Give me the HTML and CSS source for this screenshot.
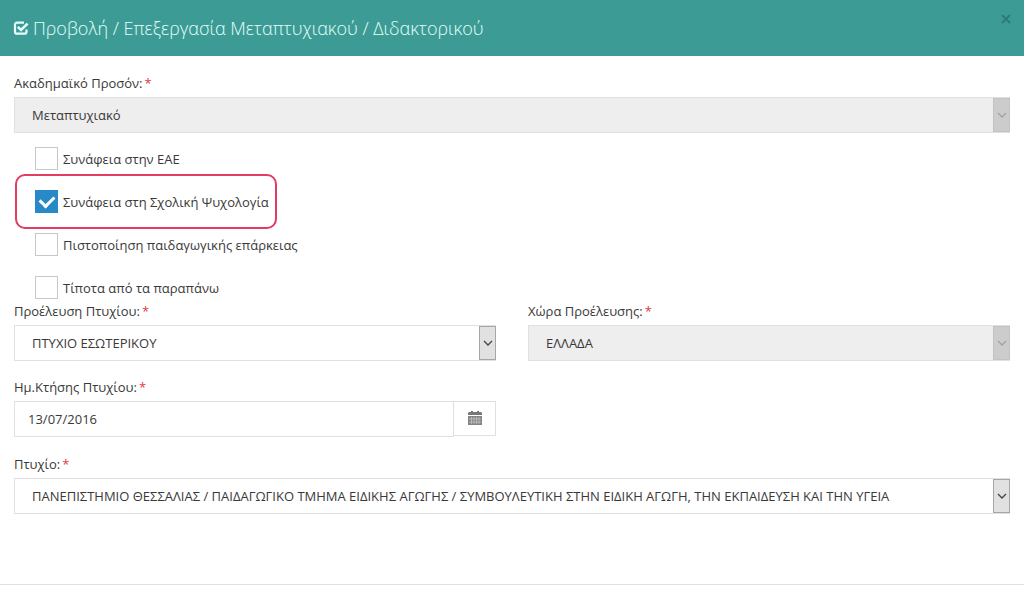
FILE: index.html
```html
<!DOCTYPE html>
<html lang="el">
<head>
<meta charset="utf-8">
<meta name="viewport" content="width=device-width, initial-scale=1">
<title>Προβολή / Επεξεργασία Μεταπτυχιακού / Διδακτορικού</title>
<link rel="stylesheet" href="styles.css">
</head>
<body>
<header class="header">
  <h1 class="title">
    <svg class="title-icon" viewBox="0 0 16 16" aria-hidden="true"><path d="M11 2.700H4A2 2 0 0 0 2 4.700v7A2 2 0 0 0 4 13.700h7.500a2 2 0 0 0 2-2V9.500" fill="none" stroke="currentColor" stroke-width="2.200"/><path d="M4.800 6.800l3.200 3.200L14.600 3.600" fill="none" stroke="currentColor" stroke-width="2.600"/></svg>
    <span>Προβολή / Επεξεργασία Μεταπτυχιακού / Διδακτορικού</span>
  </h1>
  <button class="close" type="button" aria-label="Κλείσιμο"><svg viewBox="0 0 10 10" aria-hidden="true"><path d="M1 1l8 8M9 1L1 9" stroke="currentColor" stroke-width="2"/></svg></button>
</header>
<form class="form">
  <div class="field">
    <label class="label" for="qualification">Ακαδημαϊκό Προσόν: <span class="required">*</span></label>
    <div class="select-wrap">
      <select class="control select" id="qualification" disabled><option>Μεταπτυχιακό</option></select>
      <span class="arrow"><svg viewBox="0 0 10 6" aria-hidden="true"><path d="M1 1l4 4 4-4"/></svg></span>
    </div>
  </div>
  <div class="checks">
    <label class="check"><input type="checkbox" class="box">Συνάφεια στην ΕΑΕ</label>
    <label class="check highlighted"><input type="checkbox" class="box" checked>Συνάφεια στη Σχολική Ψυχολογία</label>
    <label class="check"><input type="checkbox" class="box">Πιστοποίηση παιδαγωγικής επάρκειας</label>
    <label class="check"><input type="checkbox" class="box">Τίποτα από τα παραπάνω</label>
  </div>
  <div class="columns">
    <div class="field">
      <label class="label" for="origin">Προέλευση Πτυχίου: <span class="required">*</span></label>
      <div class="select-wrap">
        <select class="control select" id="origin"><option>ΠΤΥΧΙΟ ΕΣΩΤΕΡΙΚΟΥ</option></select>
        <span class="arrow"><svg viewBox="0 0 10 6" aria-hidden="true"><path d="M1 1l4 4 4-4"/></svg></span>
      </div>
    </div>
    <div class="field">
      <label class="label" for="country">Χώρα Προέλευσης: <span class="required">*</span></label>
      <div class="select-wrap">
        <select class="control select" id="country" disabled><option>ΕΛΛΑΔΑ</option></select>
        <span class="arrow"><svg viewBox="0 0 10 6" aria-hidden="true"><path d="M1 1l4 4 4-4"/></svg></span>
      </div>
    </div>
    <div class="field">
      <label class="label" for="date">Ημ.Κτήσης Πτυχίου: <span class="required">*</span></label>
      <div class="date">
        <input class="control date-input" id="date" type="text" value="13/07/2016">
        <button class="date-button" type="button" aria-label="Ημερολόγιο"><svg viewBox="0 0 14 15" aria-hidden="true"><path d="M1 1h2V0h2v1h4V0h2v1h2l1 1v2H0V2z" fill="#777"/><path d="M0 5h14v9H0z" fill="#858585"/><path d="M1 8h12M1 11h12M3.500 6v7M6 6v7M8.500 6v7M11 6v7" stroke="#c4c4c4" stroke-width=".8"/></svg></button>
      </div>
    </div>
  </div>
  <div class="field">
    <label class="label" for="degree">Πτυχίο: <span class="required">*</span></label>
    <div class="select-wrap">
      <select class="control select" id="degree"><option>ΠΑΝΕΠΙΣΤΗΜΙΟ ΘΕΣΣΑΛΙΑΣ / ΠΑΙΔΑΓΩΓΙΚΟ ΤΜΗΜΑ ΕΙΔΙΚΗΣ ΑΓΩΓΗΣ / ΣΥΜΒΟΥΛΕΥΤΙΚΗ ΣΤΗΝ ΕΙΔΙΚΗ ΑΓΩΓΗ, ΤΗΝ ΕΚΠΑΙΔΕΥΣΗ ΚΑΙ ΤΗΝ ΥΓΕΙΑ</option></select>
      <span class="arrow"><svg viewBox="0 0 10 6" aria-hidden="true"><path d="M1 1l4 4 4-4"/></svg></span>
    </div>
  </div>
</form>
<hr class="divider">
</body>
</html>
```
FILE: styles.css
```css
* {
  box-sizing: border-box;
}

body {
  margin: 0;
  background: #fff;
  color: #393939;
  font: 13px/18px "Open Sans", "Noto Sans", sans-serif;
}

.header {
  display: flex;
  align-items: flex-start;
  justify-content: space-between;
  padding: 14px 13px;
  background: #3d9b95;
  color: #e4fffb;
}

.title {
  display: flex;
  align-items: center;
  gap: 4px;
  margin: 0;
  font-size: 18px;
  font-weight: 300;
  line-height: 28px;
}

.title-icon {
  width: 16px;
  height: 16px;
}

.close {
  width: 10px;
  height: 10px;
  padding: 0;
  border: 0;
  background: none;
  color: #2d7b75;
}

.close svg {
  display: block;
}

.form {
  padding: 18px 14px 70px;
}

.field {
  display: flex;
  flex-direction: column;
  gap: 5px;
}

.label {
  display: flex;
  gap: 2px;
}

.required {
  color: #e0393e;
}

.control {
  width: 100%;
  min-width: 0;
  height: 36px;
  margin: 0;
  border: 1px solid #e0e0e0;
  border-radius: 0;
  background: #fff;
  color: #393939;
  font: inherit;
}

.select-wrap {
  display: grid;
  align-items: center;
}

.select {
  grid-area: 1 / 1;
  padding: 0 20px 0 17px;
  appearance: none;
}

.select:disabled {
  background: #eee;
  opacity: 1;
}

.arrow {
  display: grid;
  grid-area: 1 / 1;
  place-items: center;
  justify-self: end;
  width: 17px;
  height: 34px;
  border: 1px solid #a6a6a6;
  background: #e1e1e1;
  color: #444;
  pointer-events: none;
}

.arrow svg {
  width: 10px;
  height: 6px;
  fill: none;
  stroke: currentColor;
  stroke-width: 1.3;
}

.select:disabled + .arrow {
  border-color: #c3c3c3;
  background: #ccc;
  color: #a2a2a2;
}

.checks {
  display: flex;
  flex-direction: column;
  align-items: flex-start;
  gap: 20px;
  padding: 14px 21px 3px;
}

.check {
  display: flex;
  align-items: center;
  gap: 5px;
}

.box {
  display: grid;
  place-items: center;
  width: 23px;
  height: 23px;
  margin: 0;
  border: 1px solid #c8c8c8;
  background: #fff;
  appearance: none;
}

.box:checked {
  border-color: #2889c9;
  background: #2889c9;
}

.box:checked::before {
  content: "";
  width: 11px;
  height: 7px;
  margin-bottom: 3px;
  border: solid #fff;
  border-width: 0 0 3px 3px;
  rotate: -45deg;
}

.highlighted {
  position: relative;
}

.highlighted::after {
  content: "";
  position: absolute;
  inset: -16px -8px -16px -20px;
  border: 2px solid #e23c60;
  border-radius: 10px;
  pointer-events: none;
}

.columns {
  display: grid;
  grid-template-columns: 1fr 1fr;
  gap: 17px 32px;
  margin-bottom: 18px;
}

.date {
  display: flex;
}

.date-input {
  flex: 1;
  padding: 0 13px;
}

.date-button {
  display: grid;
  place-items: center;
  width: 43px;
  height: 35px;
  margin-left: -1px;
  padding: 0;
  border: 1px solid #e0e0e0;
  background: #fff;
}

.date-button svg {
  width: 14px;
  height: 15px;
}

.divider {
  margin: 0;
  border: 0;
  border-top: 1px solid #e0e0e0;
}
```
